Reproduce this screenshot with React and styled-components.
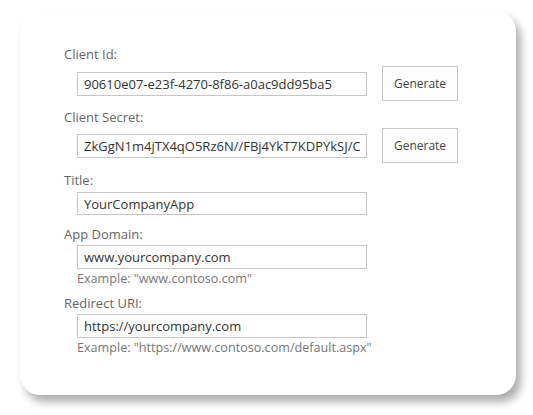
import styled, { createGlobalStyle } from "styled-components";

const GlobalStyle = createGlobalStyle`
    body {
        margin: 0;
        background: #ffffff;
        font-family: "Open Sans", "Noto Sans", sans-serif;
    }
`;

const Page = styled.div`
    width: 533px;
    height: 415px;
    padding: 11px 0 0 20px;
    box-sizing: border-box;
`;

const Card = styled.div`
    width: 496px;
    height: 384px;
    box-sizing: border-box;
    background: #ffffff;
    border-radius: 20px;
    box-shadow: 5px 7px 9px rgba(0, 0, 0, 0.32);
    padding: 34px 0 0 44px;
    display: flex;
    flex-direction: column;
`;

const Field = styled.div`
    display: flex;
    flex-direction: column;
    margin-bottom: ${(p) => p.$gap || 8}px;
`;

const Label = styled.label`
    font-size: 13px;
    line-height: 18px;
    color: #666666;
`;

const ControlRow = styled.div`
    display: flex;
    align-items: center;
    gap: 15px;
    padding-left: 13px;
    margin-top: ${(p) => p.$top || 2}px;
`;

const TextInput = styled.input`
    width: 290px;
    height: ${(p) => p.$height || 24}px;
    box-sizing: border-box;
    border: 1px solid #c6c6c6;
    padding: 0 6px;
    font-family: "Open Sans", "Noto Sans", sans-serif;
    font-size: 13px;
    color: #333333;
    background: #ffffff;
    outline: none;
`;

const Button = styled.button`
    width: 76px;
    height: 35px;
    box-sizing: border-box;
    border: 1px solid #c6c6c6;
    background: #fdfdfd;
    font-family: "Open Sans", "Noto Sans", sans-serif;
    font-size: 12px;
    color: #444444;
    padding: 0;
`;

const Hint = styled.div`
    padding-left: 13px;
    margin-top: 1px;
    font-size: 12.6px;
    line-height: 18px;
    color: #777777;
`;

export default function App() {
    return (
        <>
            <GlobalStyle />
            <Page>
                <Card>
                    <Field $gap={7}>
                        <Label>Client Id:</Label>
                        <ControlRow $top={3}>
                            <TextInput readOnly value="90610e07-e23f-4270-8f86-a0ac9dd95ba5" />
                            <Button>Generate</Button>
                        </ControlRow>
                    </Field>
                    <Field $gap={8}>
                        <Label>Client Secret:</Label>
                        <ControlRow $top={2}>
                            <TextInput readOnly value="ZkGgN1m4jTX4qO5Rz6N//FBj4YkT7KDPYkSJ/Cq1sVg=" />
                            <Button>Generate</Button>
                        </ControlRow>
                    </Field>
                    <Field $gap={10}>
                        <Label>Title:</Label>
                        <ControlRow $top={3}>
                            <TextInput $height={23} readOnly value="YourCompanyApp" />
                        </ControlRow>
                    </Field>
                    <Field $gap={6}>
                        <Label>App Domain:</Label>
                        <ControlRow $top={2}>
                            <TextInput readOnly value="www.yourcompany.com" />
                        </ControlRow>
                        <Hint>Example: "www.contoso.com"</Hint>
                    </Field>
                    <Field>
                        <Label>Redirect URI:</Label>
                        <ControlRow $top={2}>
                            <TextInput readOnly value="https://yourcompany.com" />
                        </ControlRow>
                        <Hint>Example: "https://www.contoso.com/default.aspx"</Hint>
                    </Field>
                </Card>
            </Page>
        </>
    );
}
